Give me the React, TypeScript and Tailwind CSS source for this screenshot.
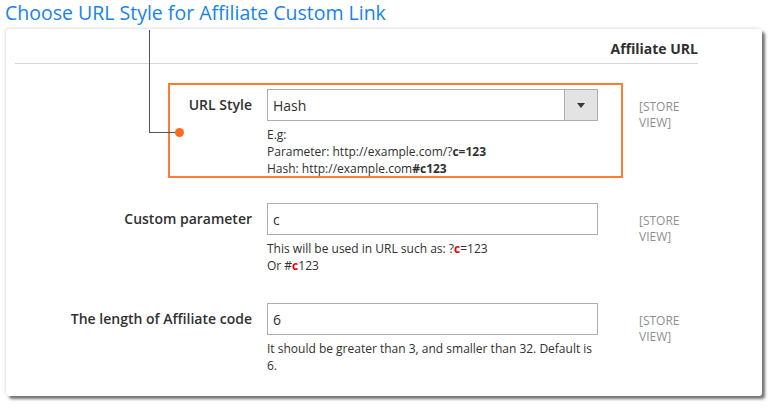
import { ReactNode } from "react";

function Scope() {
  return (
    <div className="w-[52px] pt-[10px] text-[12px] leading-[16px] text-[#8f8f8f]">
      [STORE VIEW]
    </div>
  );
}

function Row({
  label,
  control,
  note,
  className = "",
}: {
  label: string;
  control: ReactNode;
  note: ReactNode;
  className?: string;
}) {
  return (
    <div className={`flex items-start ${className}`}>
      <div className="w-[261px] shrink-0 pr-[15px] pt-[6px] text-right text-[14px] font-semibold leading-[20px] text-[#303030]">
        {label}
      </div>
      <div className="w-[331px] shrink-0">
        {control}
        <div className="mt-[5px] text-[12px] leading-[17px] text-[#303030]">{note}</div>
      </div>
      <div className="ml-[41px]">
        <Scope />
      </div>
    </div>
  );
}

function TextInput({ value }: { value: string }) {
  return (
    <div className="flex h-[32px] items-center border border-[#adadad] bg-white px-[5px] text-[14px] text-[#303030]">
      {value}
    </div>
  );
}

export default function App() {
  return (
    <div className="h-[408px] w-[775px] bg-white font-['Open_Sans',sans-serif]">
      <div className="h-[29px]">
        <h1 className="pl-[5px] text-[19.5px] leading-[25px] text-[#1683ee]">
          Choose URL Style for Affiliate Custom Link
        </h1>
      </div>

      <div className="ml-[6px] w-[756px] rounded-[3px] bg-white pb-[22px] shadow-[3px_3px_3px_rgba(0,0,0,0.55),-1px_-1px_3px_rgba(0,0,0,0.12)]">
        <div className="mx-[9px] flex h-[35px] w-[683px] items-end justify-end border-b border-[#d6d6d6] pb-[4px] text-[14px] font-bold text-[#303030]">
          Affiliate URL
        </div>

        <div className="relative mt-[25px]">
          {/* annotation box */}
          <div className="pointer-events-none absolute left-[162px] top-[-6px] h-[95px] w-[455px] border-2 border-[#ff7b34]" />
          <div className="pointer-events-none absolute left-[143px] top-[-59px] h-[103px] w-[30px] border-b border-l border-[#555]" />
          <div className="pointer-events-none absolute left-[169px] top-[39px] h-[9px] w-[9px] rounded-full bg-[#ff6a1f]" />

          <Row
            label="URL Style"
            control={
              <div className="flex h-[32px] border border-[#adadad] bg-white text-[14px] text-[#303030]">
                <div className="flex flex-1 items-center px-[5px]">Hash</div>
                <div className="flex w-[33px] items-center justify-center border-l border-[#adadad] bg-[#e3e3e3]">
                  <svg width="8" height="5" viewBox="0 0 8 5">
                    <path d="M0 0h8L4 5z" fill="#41362f" />
                  </svg>
                </div>
              </div>
            }
            note={
              <>
                <div>E.g:</div>
                <div>
                  Parameter: http://example.com/?<b>c=123</b>
                </div>
                <div>
                  Hash: http://example.com<b>#c123</b>
                </div>
              </>
            }
          />
        </div>

        <Row
          className="mt-[26px]"
          label="Custom parameter"
          control={<TextInput value="c" />}
          note={
            <>
              <div>
                This will be used in URL such as: ?<b className="text-[#eb0000]">c</b>=123
              </div>
              <div>
                Or #<b className="text-[#eb0000]">c</b>123
              </div>
            </>
          }
        />

        <Row
          className="mt-[29px]"
          label="The length of Affiliate code"
          control={<TextInput value="6" />}
          note={<div>It should be greater than 3, and smaller than 32. Default is 6.</div>}
        />
      </div>
    </div>
  );
}
